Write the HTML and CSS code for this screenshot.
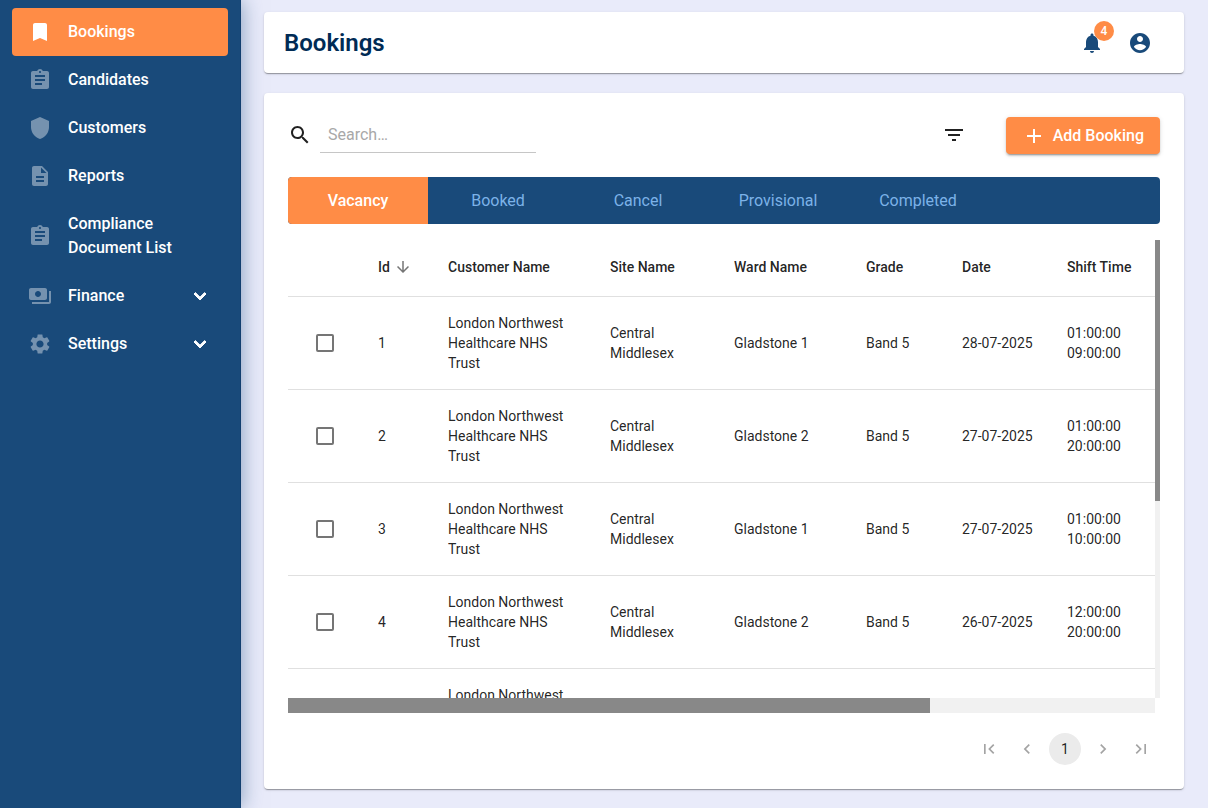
FILE: index.html
```html
<!DOCTYPE html>
<html lang="en">
<head>
  <meta charset="UTF-8" />
  <meta name="viewport" content="width=device-width, initial-scale=1.0"/>
  <title>Bookings</title>
  <link rel="stylesheet" href="styles.css">
</head>
<body>

  <aside class="sidebar">
    <nav>
      <a href="#" class="nav-item active">
        <svg viewBox="0 0 24 24"><path d="M17 3H7c-1.100 0-1.990.9-1.990 2L5 21l7-3 7 3V5c0-1.100-.9-2-2-2z"/></svg>
        <span>Bookings</span>
      </a>
      <a href="#" class="nav-item">
        <svg viewBox="0 0 24 24"><path d="M19 3h-4.180C14.400 1.840 13.300 1 12 1c-1.300 0-2.400.84-2.820 2H5c-1.100 0-2 .9-2 2v14c0 1.100.9 2 2 2h14c1.100 0 2-.9 2-2V5c0-1.100-.9-2-2-2zm-7 0c.55 0 1 .45 1 1s-.45 1-1 1-1-.45-1-1 .45-1 1-1zm2 14H7v-2h7v2zm3-4H7v-2h10v2zm0-4H7V7h10v2z"/></svg>
        <span>Candidates</span>
      </a>
      <a href="#" class="nav-item">
        <svg viewBox="0 0 24 24"><path d="M12 1 3 5v6c0 5.550 3.840 10.740 9 12 5.160-1.260 9-6.450 9-12V5l-9-4z"/></svg>
        <span>Customers</span>
      </a>
      <a href="#" class="nav-item">
        <svg viewBox="0 0 24 24"><path d="M14 2H6c-1.100 0-1.990.9-1.990 2L4 20c0 1.100.89 2 1.990 2H18c1.100 0 2-.9 2-2V8l-6-6zm2 16H8v-2h8v2zm0-4H8v-2h8v2zm-3-5V3.500L18.500 9H13z"/></svg>
        <span>Reports</span>
      </a>
      <a href="#" class="nav-item">
        <svg viewBox="0 0 24 24"><path d="M19 3h-4.180C14.400 1.840 13.300 1 12 1c-1.300 0-2.400.84-2.820 2H5c-1.100 0-2 .9-2 2v14c0 1.100.9 2 2 2h14c1.100 0 2-.9 2-2V5c0-1.100-.9-2-2-2zm-7 0c.55 0 1 .45 1 1s-.45 1-1 1-1-.45-1-1 .45-1 1-1zm2 14H7v-2h7v2zm3-4H7v-2h10v2zm0-4H7V7h10v2z"/></svg>
        <span>Compliance Document List</span>
      </a>
      <a href="#" class="nav-item">
        <svg viewBox="0 0 24 24"><path d="M19 14V6c0-1.100-.9-2-2-2H3c-1.100 0-2 .9-2 2v8c0 1.100.9 2 2 2h14c1.100 0 2-.9 2-2zm-9-1c-1.660 0-3-1.340-3-3s1.340-3 3-3 3 1.340 3 3-1.340 3-3 3zm13-6v11c0 1.100-.9 2-2 2H4v-2h17V7h2z"/></svg>
        <span>Finance</span>
        <svg class="chevron" viewBox="0 0 24 24"><path d="M16.590 8.590 12 13.170 7.410 8.590 6 10l6 6 6-6z"/></svg>
      </a>
      <a href="#" class="nav-item">
        <svg viewBox="0 0 24 24"><path d="M19.140 12.940c.04-.3.06-.61.06-.94 0-.32-.02-.64-.07-.94l2.030-1.580c.18-.14.23-.41.12-.61l-1.920-3.320c-.12-.22-.37-.29-.59-.22l-2.390.96c-.5-.38-1.030-.7-1.620-.94l-.36-2.540c-.04-.24-.24-.41-.48-.41h-3.840c-.24 0-.43.17-.47.41l-.36 2.540c-.59.24-1.130.57-1.620.94l-2.390-.96c-.22-.08-.47 0-.59.22L2.740 8.870c-.12.21-.08.47.12.61l2.030 1.580c-.05.3-.09.63-.09.94s.02.64.07.94l-2.030 1.580c-.18.14-.23.41-.12.61l1.920 3.320c.12.22.37.29.59.22l2.390-.96c.5.38 1.030.7 1.620.94l.36 2.540c.05.24.24.41.48.41h3.840c.24 0 .44-.17.47-.41l.36-2.540c.59-.24 1.130-.56 1.620-.94l2.390.96c.22.08.47 0 .59-.22l1.920-3.320c.12-.22.07-.47-.12-.61l-2.010-1.580zM12 15.600c-1.980 0-3.600-1.620-3.600-3.600s1.620-3.600 3.600-3.600 3.600 1.620 3.600 3.600-1.620 3.600-3.600 3.600z"/></svg>
        <span>Settings</span>
        <svg class="chevron" viewBox="0 0 24 24"><path d="M16.590 8.590 12 13.170 7.410 8.590 6 10l6 6 6-6z"/></svg>
      </a>
    </nav>
  </aside>

  <main>
    <header class="paper topbar">
      <h1>Bookings</h1>
      <div class="topbar-actions">
        <button class="icon-button" aria-label="Notifications">
          <svg viewBox="0 0 24 24"><path d="M12 22c1.100 0 2-.9 2-2h-4c0 1.100.89 2 2 2zm6-6v-5c0-3.070-1.640-5.640-4.500-6.320V4c0-.83-.67-1.500-1.500-1.500s-1.500.67-1.500 1.500v.68C7.630 5.360 6 7.920 6 11v5l-2 2v1h16v-1l-2-2z"/></svg>
          <span class="badge">4</span>
        </button>
        <button class="icon-button" aria-label="Account">
          <svg viewBox="0 0 24 24"><path d="M12 2C6.480 2 2 6.480 2 12s4.480 10 10 10 10-4.480 10-10S17.520 2 12 2zm0 3c1.660 0 3 1.340 3 3s-1.340 3-3 3-3-1.340-3-3 1.340-3 3-3zm0 14.200c-2.500 0-4.710-1.280-6-3.220.03-1.990 4-3.080 6-3.080 1.990 0 5.970 1.090 6 3.080-1.290 1.940-3.500 3.220-6 3.220z"/></svg>
        </button>
      </div>
    </header>

    <section class="paper content">
      <div class="toolbar">
        <label class="search">
          <svg viewBox="0 0 24 24"><path d="M15.500 14h-.79l-.28-.27C15.410 12.590 16 11.110 16 9.500 16 5.910 13.090 3 9.500 3S3 5.910 3 9.500 5.910 16 9.500 16c1.610 0 3.090-.59 4.230-1.570l.27.28v.79l5 4.990L20.490 19l-4.990-5zm-6 0C7.010 14 5 11.990 5 9.500S7.010 5 9.500 5 14 7.010 14 9.500 11.990 14 9.500 14z"/></svg>
          <input type="text" placeholder="Search…" aria-label="Search">
        </label>
        <div class="toolbar-actions">
          <button class="icon-button filter" aria-label="Filter">
            <svg viewBox="0 0 24 24"><path d="M10 18h4v-2h-4v2zM3 6v2h18V6H3zm3 7h12v-2H6v2z"/></svg>
          </button>
          <button class="add-button">
            <svg viewBox="0 0 24 24"><path d="M19 13h-6v6h-2v-6H5v-2h6V5h2v6h6v2z"/></svg>
            Add Booking
          </button>
        </div>
      </div>

      <div class="tabs">
        <button class="tab selected">Vacancy</button>
        <button class="tab">Booked</button>
        <button class="tab">Cancel</button>
        <button class="tab">Provisional</button>
        <button class="tab">Completed</button>
      </div>

      <div class="table-frame">
        <div class="table-container">
          <table>
            <colgroup>
              <col class="col-check">
              <col class="col-id">
              <col class="col-customer">
              <col class="col-site">
              <col class="col-ward">
              <col class="col-grade">
              <col class="col-date">
              <col class="col-shift">
            </colgroup>
            <thead>
              <tr>
                <th></th>
                <th><span class="sort">Id <svg viewBox="0 0 24 24"><path d="m20 12-1.410-1.410L13 16.170V4h-2v12.170l-5.580-5.590L4 12l8 8 8-8z"/></svg></span></th>
                <th>Customer Name</th>
                <th>Site Name</th>
                <th>Ward Name</th>
                <th>Grade</th>
                <th>Date</th>
                <th>Shift Time</th>
              </tr>
            </thead>
            <tbody>
              <tr>
                <td><input type="checkbox" aria-label="Select booking 1"></td>
                <td>1</td>
                <td>London Northwest Healthcare NHS Trust</td>
                <td>Central Middlesex</td>
                <td>Gladstone 1</td>
                <td>Band 5</td>
                <td>28-07-2025</td>
                <td>01:00:00<br>09:00:00</td>
              </tr>
              <tr>
                <td><input type="checkbox" aria-label="Select booking 2"></td>
                <td>2</td>
                <td>London Northwest Healthcare NHS Trust</td>
                <td>Central Middlesex</td>
                <td>Gladstone 2</td>
                <td>Band 5</td>
                <td>27-07-2025</td>
                <td>01:00:00<br>20:00:00</td>
              </tr>
              <tr>
                <td><input type="checkbox" aria-label="Select booking 3"></td>
                <td>3</td>
                <td>London Northwest Healthcare NHS Trust</td>
                <td>Central Middlesex</td>
                <td>Gladstone 1</td>
                <td>Band 5</td>
                <td>27-07-2025</td>
                <td>01:00:00<br>10:00:00</td>
              </tr>
              <tr>
                <td><input type="checkbox" aria-label="Select booking 4"></td>
                <td>4</td>
                <td>London Northwest Healthcare NHS Trust</td>
                <td>Central Middlesex</td>
                <td>Gladstone 2</td>
                <td>Band 5</td>
                <td>26-07-2025</td>
                <td>12:00:00<br>20:00:00</td>
              </tr>
              <tr>
                <td></td>
                <td></td>
                <td>London Northwest Healthcare NHS Trust</td>
                <td></td>
                <td></td>
                <td></td>
                <td></td>
                <td></td>
              </tr>
            </tbody>
          </table>
        </div>
        <div class="scrollbar vertical"><div class="thumb"></div></div>
        <div class="scrollbar horizontal"><div class="thumb"></div></div>
      </div>

      <div class="pagination">
        <button disabled aria-label="First page"><svg viewBox="0 0 24 24"><path d="M18.410 16.590 13.820 12l4.590-4.590L17 6l-6 6 6 6zM6 6h2v12H6z"/></svg></button>
        <button disabled aria-label="Previous page"><svg viewBox="0 0 24 24"><path d="M15.410 7.410 14 6l-6 6 6 6 1.410-1.410L10.830 12z"/></svg></button>
        <button class="current">1</button>
        <button disabled aria-label="Next page"><svg viewBox="0 0 24 24"><path d="M10 6 8.590 7.410 13.170 12l-4.580 4.590L10 18l6-6z"/></svg></button>
        <button disabled aria-label="Last page"><svg viewBox="0 0 24 24"><path d="M5.590 7.410 10.180 12l-4.590 4.590L7 18l6-6-6-6zM16 6h2v12h-2z"/></svg></button>
      </div>
    </section>
  </main>

</body>
</html>
```
FILE: styles.css
```css
* {
  box-sizing: border-box;
}

body {
  display: flex;
  min-height: 100vh;
  margin: 0;
  font-family: Roboto, sans-serif;
  font-size: 16px;
  line-height: 24px;
  color: rgba(0, 0, 0, 0.87);
  background-color: #e9ebfa;
}

button {
  border: none;
  padding: 0;
  background: none;
  font: inherit;
  color: inherit;
  cursor: pointer;
}

svg {
  display: block;
  flex: none;
  width: 24px;
  height: 24px;
  fill: currentColor;
}

/* sidebar */
.sidebar {
  flex: none;
  width: 241px;
  padding: 8px 12px;
  border-right: 1px solid #123f6f;
  background-color: #194a7a;
  box-shadow: 0 0 20px rgba(25, 74, 122, 0.5);
}

.nav-item {
  display: flex;
  align-items: center;
  gap: 16px;
  padding: 12px 16px;
  border-radius: 4px;
  color: white;
  font-weight: 500;
  text-decoration: none;
}

.nav-item span {
  flex: 1;
}

.nav-item svg {
  opacity: 0.4;
}

.nav-item.active {
  background-color: #ff8c46;
}

.nav-item.active svg,
.nav-item .chevron {
  opacity: 1;
}

.nav-item .chevron {
  stroke: currentColor;
  stroke-width: 1px;
}

/* page */
main {
  flex: 1;
  min-width: 0;
  padding: 12px 24px 19px 23px;
}

.paper {
  background-color: white;
  border-radius: 4px;
  box-shadow: 0 2px 1px -1px rgba(0, 0, 0, 0.2), 0 1px 1px rgba(0, 0, 0, 0.14), 0 1px 3px rgba(0, 0, 0, 0.12);
}

.topbar {
  display: flex;
  justify-content: space-between;
  align-items: center;
  margin-bottom: 20px;
  padding: 11px 24px 10px 20px;
}

.topbar h1 {
  margin: 0;
  font-size: 24px;
  font-weight: 600;
  line-height: 32px;
  color: #002b55;
}

.topbar-actions {
  display: flex;
  gap: 8px;
}

.icon-button {
  position: relative;
  padding: 8px;
}

.topbar .icon-button {
  color: #194a7a;
}

.badge {
  position: absolute;
  top: -2px;
  right: -2px;
  width: 20px;
  height: 20px;
  border-radius: 10px;
  background-color: #ff8c46;
  color: white;
  font-size: 12px;
  font-weight: 500;
  line-height: 20px;
}

.content {
  padding: 24px;
}

.toolbar {
  display: flex;
  justify-content: space-between;
  align-items: flex-start;
  margin-bottom: 23px;
}

.search {
  display: flex;
  align-items: center;
  gap: 8px;
}

.search input {
  width: 216px;
  height: 36px;
  padding: 0 8px;
  border: none;
  border-bottom: 1px solid #c6c6c6;
  outline: none;
  background: none;
  font: inherit;
}

.search input::placeholder {
  color: #a8a8a8;
}

.toolbar-actions {
  display: flex;
  align-items: flex-start;
  gap: 34px;
}

.icon-button.filter {
  padding: 6px;
}

.add-button {
  display: flex;
  align-items: center;
  gap: 7px;
  padding: 7px 16px 6px;
  border-radius: 4px;
  background-color: #ff8c46;
  color: white;
  font-weight: 500;
  box-shadow: 0 3px 1px -2px rgba(0, 0, 0, 0.2), 0 2px 2px rgba(0, 0, 0, 0.14), 0 1px 5px rgba(0, 0, 0, 0.12);
}

.tabs {
  display: flex;
  height: 47px;
  margin-bottom: 16px;
  border-radius: 4px;
  overflow: hidden;
  background-color: #194a7a;
}

.tab {
  width: 140px;
  color: #7cb2e8;
}

.tab.selected {
  background-color: #ff8c46;
  color: white;
  font-weight: 500;
}

/* table */
.table-frame {
  display: grid;
  grid-template-columns: minmax(0, 1fr) 5px;
  grid-template-rows: minmax(0, 1fr) 15px;
  height: calc(100vh - 335px);
  min-height: 200px;
}

.table-container {
  overflow: auto;
  scrollbar-width: none;
}

.scrollbar {
  background-color: #f1f1f1;
}

.scrollbar .thumb {
  background-color: #888;
}

.vertical .thumb {
  height: 57%;
}

.horizontal .thumb {
  width: 74%;
  height: 100%;
}

table {
  width: 100%;
  min-width: 867px;
  table-layout: fixed;
  border-collapse: separate;
  border-spacing: 0;
  font-size: 14px;
  line-height: 20px;
}

.col-check { width: 74px; }
.col-id { width: 70px; }
.col-customer { width: 162px; }
.col-site { width: 124px; }
.col-ward { width: 132px; }
.col-grade { width: 96px; }
.col-date { width: 105px; }

th,
td {
  padding: 16px;
  border-bottom: 1px solid #e0e0e0;
  text-align: left;
}

th {
  padding: 15px 16px 17px;
  font-weight: 500;
  line-height: 24px;
  white-space: nowrap;
}

.sort {
  display: flex;
  align-items: center;
  gap: 4px;
}

.sort svg {
  width: 18px;
  height: 18px;
  color: #757575;
}

input[type="checkbox"] {
  display: block;
  width: 18px;
  height: 18px;
  margin: 0 auto;
  appearance: none;
  border: 2px solid #757575;
  border-radius: 2px;
}

input[type="checkbox"]:checked {
  background-color: #194a7a;
}

/* pagination */
.pagination {
  display: flex;
  justify-content: flex-end;
  gap: 6px;
  margin-top: 20px;
  padding-right: 3px;
}

.pagination button {
  display: flex;
  align-items: center;
  justify-content: center;
  width: 32px;
  height: 32px;
  border-radius: 16px;
  font-size: 14px;
}

.pagination button:disabled {
  color: #a4a4a4;
}

.pagination .current {
  background-color: #ebebeb;
}

.pagination svg {
  width: 20px;
  height: 20px;
}
```
